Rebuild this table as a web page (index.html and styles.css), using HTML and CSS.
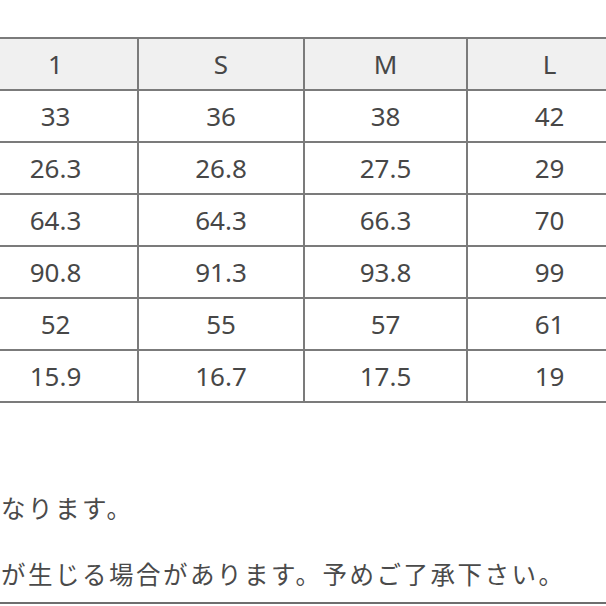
FILE: index.html
```html
<!DOCTYPE html>
<html lang="ja">
<head>
<meta charset="utf-8">
<title>サイズ表</title>
<link rel="stylesheet" href="styles.css">
</head>
<body>
<div class="sheet">
  <table class="size-table">
    <colgroup>
      <col class="c1"><col class="c2"><col class="c3"><col class="c4">
    </colgroup>
    <thead>
      <tr><th>1</th><th>S</th><th>M</th><th>L</th></tr>
    </thead>
    <tbody>
      <tr><td>33</td><td>36</td><td>38</td><td>42</td></tr>
      <tr><td>26.3</td><td>26.8</td><td>27.5</td><td>29</td></tr>
      <tr><td>64.3</td><td>64.3</td><td>66.3</td><td>70</td></tr>
      <tr><td>90.8</td><td>91.3</td><td>93.8</td><td>99</td></tr>
      <tr><td>52</td><td>55</td><td>57</td><td>61</td></tr>
      <tr><td>15.9</td><td>16.7</td><td>17.5</td><td>19</td></tr>
    </tbody>
  </table>
  <div class="notes">
    <p class="note">なります。</p>
    <p class="note">が生じる場合があります。予めご了承下さい。</p>
  </div>
  <div class="rule"></div>
</div>
</body>
</html>
```
FILE: styles.css
```css
html, body {
  margin: 0;
  padding: 0;
  background: #ffffff;
}
body {
  width: 606px;
  height: 606px;
  overflow: hidden;
  font-family: "Noto Sans", "Noto Sans CJK JP", sans-serif;
  color: #474747;
}
.sheet {
  display: flex;
  flex-direction: column;
}
.size-table {
  margin-top: 37px;
  margin-left: -28px;
  border-collapse: collapse;
  table-layout: fixed;
  width: 659px;
  font-size: 26px;
  flex: none;
}
.c1 { width: 165px; }
.c2 { width: 166px; }
.c3 { width: 163px; }
.c4 { width: 165px; }
.size-table th,
.size-table td {
  border: 2px solid #7b7b7b;
  height: 50px;
  padding: 0;
  text-align: center;
  vertical-align: middle;
  font-weight: 400;
  line-height: 30px;
}
.size-table th {
  background: #f0f0f0;
}
.notes {
  padding-top: 90px;
  padding-left: 1px;
  font-family: "Noto Sans CJK JP", sans-serif;
  font-size: 24.5px;
  letter-spacing: 2.5px;
  color: #4a4a4a;
}
.note {
  margin: 0;
  line-height: 30px;
  white-space: nowrap;
}
.note + .note {
  margin-top: 36px;
}
.rule {
  margin-top: 13px;
  border-top: 2px solid #6e6e6e;
}
```
